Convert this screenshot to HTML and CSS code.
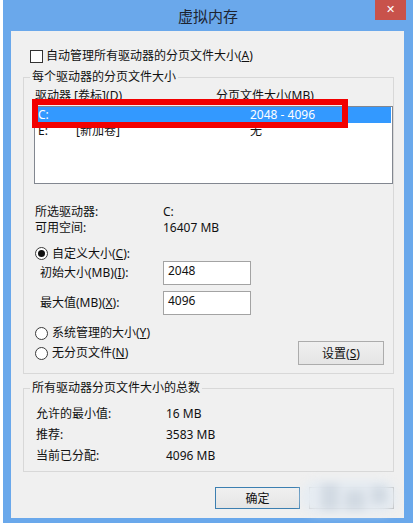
FILE: index.html
```html
<!DOCTYPE html>
<html lang="zh-CN">
<head>
  <meta charset="UTF-8">
  <title>虚拟内存</title>
  <link rel="stylesheet" href="styles.css">
</head>
<body>
  <div class="window">
    <div class="titlebar">
      <span></span>
      <h1 class="title">虚拟内存</h1>
      <button class="close" type="button">&#x2715;</button>
    </div>

    <div class="client">
      <label class="check-row"><span class="checkbox"></span><span>自动管理所有驱动器的分页文件大小(<u>A</u>)</span></label>

      <fieldset class="group">
        <legend>每个驱动器的分页文件大小</legend>
        <div class="list-head">
          <span class="col-drive">驱动器 [卷标](<u>D</u>)</span>
          <span>分页文件大小(MB)</span>
        </div>
        <div class="listbox">
          <div class="list-row selected"><span class="col-letter">C:</span><span class="col-label"></span><span>2048 - 4096</span></div>
          <div class="list-row"><span class="col-letter">E:</span><span class="col-label">[新加卷]</span><span>无</span></div>
        </div>

        <div class="info">
          <div class="info-row"><span class="info-label">所选驱动器:</span><span>C:</span></div>
          <div class="info-row"><span class="info-label">可用空间:</span><span>16407 MB</span></div>
        </div>

        <label class="radio-row custom"><span class="radio on"></span><span>自定义大小(<u>C</u>):</span></label>
        <div class="field-row">
          <span class="field-label">初始大小(MB)(<u>I</u>):</span>
          <div class="textbox">2048</div>
        </div>
        <div class="field-row">
          <span class="field-label">最大值(MB)(<u>X</u>):</span>
          <div class="textbox">4096</div>
        </div>
        <label class="radio-row system"><span class="radio"></span><span>系统管理的大小(<u>Y</u>)</span></label>
        <div class="set-row">
          <label class="radio-row"><span class="radio"></span><span>无分页文件(<u>N</u>)</span></label>
          <button class="btn btn-set" type="button">设置(<u>S</u>)</button>
        </div>
      </fieldset>

      <fieldset class="group totals">
        <legend>所有驱动器分页文件大小的总数</legend>
        <div class="total-row"><span class="total-label">允许的最小值:</span><span>16 MB</span></div>
        <div class="total-row"><span class="total-label">推荐:</span><span>3583 MB</span></div>
        <div class="total-row"><span class="total-label">当前已分配:</span><span>4096 MB</span></div>
      </fieldset>

      <div class="actions">
        <button class="btn btn-default" type="button">确定</button>
        <button class="btn" type="button">取消</button>
      </div>
    </div>

    <!-- annotation + watermark painted over the dialog -->
    <div class="mark"></div>
    <div class="watermark"><span class="wm-a"></span><span class="wm-b"></span><span class="wm-c"></span></div>
  </div>
</body>
</html>
```

FILE: styles.css
```css
body {
  margin: 0;
  background: #ffffff;
  font-family: "Noto Sans", "Noto Sans CJK SC", sans-serif;
  font-size: 12px;
  line-height: 16px;
  color: #111111;
}

.window {
  position: relative;
  margin-left: 3px;
  width: 410px;
  height: 523px;
  background: #6aa8eb;
  display: flex;
  flex-direction: column;
}

.titlebar {
  height: 31px;
  display: grid;
  grid-template-columns: 1fr auto 1fr;
}
.title {
  margin: 0;
  font-family: "Noto Sans CJK SC", sans-serif;
  font-size: 15px;
  font-weight: normal;
  line-height: 32px;
  color: #1d2430;
}
.close {
  justify-self: end;
  align-self: start;
  margin: 0 7px 0 0;
  width: 31px;
  height: 20px;
  padding: 0;
  border: none;
  background: #c8524b;
  color: #ffffff;
  font-family: "DejaVu Sans", sans-serif;
  font-size: 11px;
  font-weight: bold;
  line-height: 20px;
}

.client {
  margin: 0 9px 5px 8px;
  flex: 1;
  background: #f0f0f0;
  padding: 17px 10px 0 12px;
  display: flex;
  flex-direction: column;
}

u { text-decoration: underline; }

.check-row {
  display: flex;
  align-items: center;
  gap: 3px;
  margin-left: 7px;
  height: 16px;
}
.checkbox {
  width: 11px;
  height: 11px;
  border: 1px solid #333333;
  background: #ffffff;
}

.group {
  margin: 5px 0 0 0;
  padding: 0 0 8px 0;
  min-width: 0;
  border: 1px solid #d8d8d8;
}
.group legend {
  margin-left: 6px;
  padding: 0 2px;
  line-height: 16px;
}

.list-head {
  display: flex;
  margin-top: 3px;
  padding-left: 11px;
  height: 16px;
}
.col-drive { width: 181px; }

.listbox {
  margin: 2px 0 0 10px;
  height: 76px;
  border: 1px solid #828790;
  background: #ffffff;
}
.list-row {
  display: flex;
  height: 16px;
  line-height: 16px;
  padding-left: 3px;
}
.list-row.selected {
  background: #3399ff;
  color: #ffffff;
  margin-right: 1px;
}
.col-letter { width: 38px; }
.col-label { width: 174px; }

.info { margin-top: 20px; }
.info-row {
  display: flex;
  padding-left: 11px;
  height: 16px;
}
.info-label { width: 128px; }

.radio-row {
  display: flex;
  align-items: center;
  gap: 4px;
  margin-left: 11px;
  height: 16px;
}
.radio-row.custom { margin-top: 10px; height: 15px; }
.radio-row.system { margin-top: 10px; }
.radio {
  width: 11px;
  height: 11px;
  border: 1px solid #3a3a3a;
  border-radius: 50%;
  background: #ffffff;
  display: flex;
  align-items: center;
  justify-content: center;
}
.radio.on::after {
  content: "";
  width: 7px;
  height: 7px;
  border-radius: 50%;
  background: #111111;
}

.field-row {
  display: flex;
  align-items: center;
  height: 24px;
  padding-left: 16px;
  margin-bottom: 6px;
}
.field-label { width: 123px; }
.textbox {
  width: 82px;
  height: 20px;
  border: 1px solid #a3a3a3;
  background: #ffffff;
  padding: 2px 0 0 4px;
  line-height: 14px;
}

.set-row {
  display: flex;
  align-items: center;
  justify-content: space-between;
  height: 24px;
  padding-right: 9px;
}

.btn {
  font-family: inherit;
  font-size: 12px;
  color: #111111;
  width: 86px;
  height: 24px;
  padding: 0;
  border: 1px solid #acacac;
  background: linear-gradient(#f0f0f0, #e5e5e5);
}

.totals { margin-top: 6px; padding-bottom: 5px; }
.total-row {
  display: flex;
  height: 21px;
  line-height: 21px;
  padding-left: 12px;
}
.total-row:first-of-type { margin-top: 7px; }
.total-label { width: 130px; }

.actions {
  display: flex;
  justify-content: flex-end;
  gap: 9px;
  margin-top: 15px;
}
.actions .btn { width: 85px; height: 22px; }
.btn-default { border-color: #3c7fb1; }

.mark {
  position: absolute;
  left: 29px;
  top: 99px;
  width: 304px;
  height: 17px;
  border: 6px solid #f20000;
}

.watermark {
  position: absolute;
  left: 298px;
  top: 480px;
  width: 96px;
  height: 34px;
  border-radius: 16px;
  background: #e6ecf2;
  filter: blur(4px);
}
.watermark span {
  position: absolute;
  background: #d2dae3;
}
.wm-a { left: 20px; top: 4px; width: 18px; height: 26px; }
.wm-b { left: 44px; top: 10px; width: 20px; height: 20px; background: #c6d0da; }
.wm-c { left: 70px; top: 6px; width: 16px; height: 18px; }
```
